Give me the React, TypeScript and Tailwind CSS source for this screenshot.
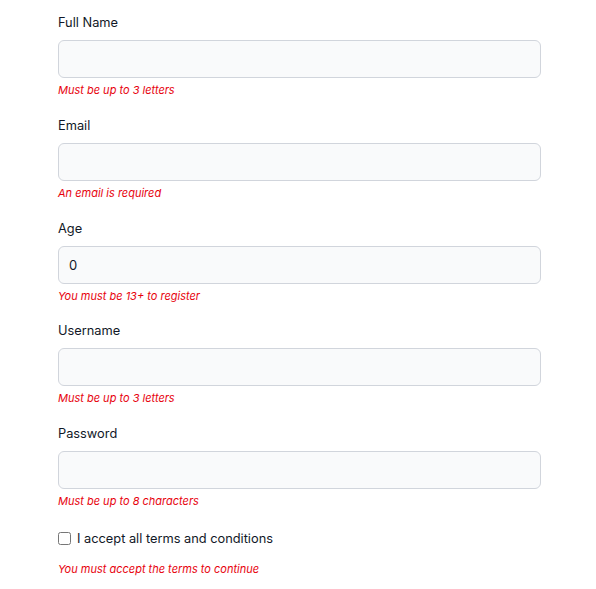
const fields = [
  { label: 'Full Name', value: '', error: 'Must be up to 3 letters' },
  { label: 'Email', value: '', error: 'An email is required' },
  { label: 'Age', value: '0', error: 'You must be 13+ to register' },
  { label: 'Username', value: '', error: 'Must be up to 3 letters' },
  { label: 'Password', value: '', error: 'Must be up to 8 characters' },
]

export default function App() {
  return (
    <div className="min-h-screen bg-white font-['Inter','Liberation_Sans',sans-serif]">
      <form className="w-[483px] ml-[58px] pt-3">
        {fields.map(f => (
          <div key={f.label} className="mb-[16.75px]">
            <label className="block text-[12.8px] leading-[21px] text-[#111827] mb-[7px]">{f.label}</label>
            <input
              type={f.label === 'Password' ? 'password' : 'text'}
              defaultValue={f.value}
              className="block w-full h-[38px] px-[10px] rounded-md border border-gray-300 bg-gray-50 text-[13px] text-gray-900 outline-none"
            />
            <p className="mt-1 text-[11px] leading-4 italic text-red-600">{f.error}</p>
          </div>
        ))}

        {/* 약관 동의 */}
        <div className="pt-[3px]">
          <label className="flex items-center gap-[6px] text-[12.8px] leading-5 text-[#111827]">
            <input type="checkbox" className="w-[13px] h-[13px] m-0" />
            I accept all terms and conditions
          </label>
          <p className="mt-3 text-[11px] leading-4 italic text-red-600">You must accept the terms to continue</p>
        </div>
      </form>
    </div>
  )
}
